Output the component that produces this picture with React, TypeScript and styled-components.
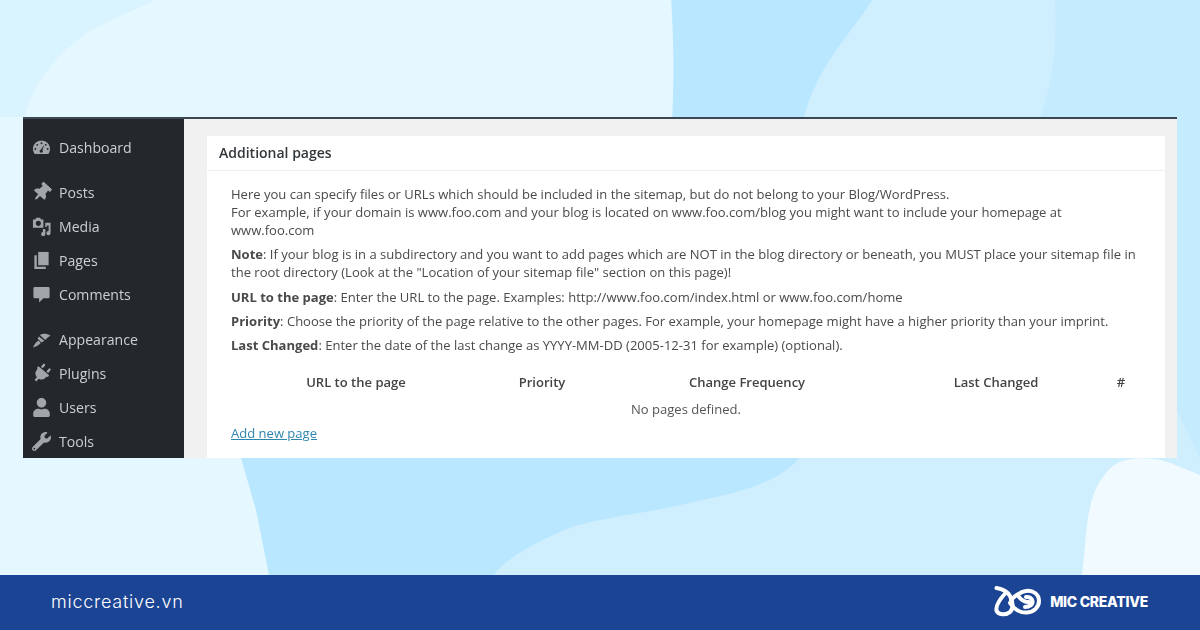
import styled, { createGlobalStyle } from 'styled-components'
import { FaPlug, FaThumbtack, FaUser, FaWrench } from 'react-icons/fa'

const GlobalStyle = createGlobalStyle`
html, body {
  margin: 0;
  padding: 0;
  background: #e5f7ff;
}
* {
  box-sizing: border-box;
}
`

const Page = styled.div`
width: 1200px;
height: 630px;
display: flex;
flex-direction: column;
overflow: hidden;
font-family: 'Open Sans', 'Liberation Sans', sans-serif;
`

const Hero = styled.section`
position: relative;
height: 575px;
padding: 117px 23px 0;
`

const Blobs = styled.svg`
position: absolute;
left: 0;
top: 0;
`

const Shot = styled.div`
position: relative;
height: 341px;
display: flex;
overflow: hidden;
border-top: 2px solid #3b4854;
background: #f1f1f1;
filter: blur(0.35px);
`

const Sidebar = styled.nav`
width: 161px;
flex: none;
background: #23282d;
padding-top: 11px;
display: flex;
flex-direction: column;
`

const MenuGroup = styled.div`
margin-bottom: 11.2px;
`

const MenuItem = styled.div`
height: 34px;
display: flex;
align-items: center;
gap: 8px;
padding-left: 9px;
color: #ccd0d3;
font-size: 14.1px;
svg {
  width: 19px;
  height: 19px;
  flex: none;
  color: #a3a6a9;
  fill: currentColor;
}
`

const Tack = styled(FaThumbtack)`
transform: rotate(42deg);
`

const Plug = styled(FaPlug)`
transform: rotate(40deg);
`

const Content = styled.main`
flex: 1;
padding: 16px 11px 0 22px;
`

const Card = styled.div`
height: 340px;
background: #fff;
border: 1px solid #f0f0f0;
border-bottom: none;
`

const CardTitle = styled.h2`
margin: 0;
height: 35px;
padding: 0 12px 2px;
display: flex;
align-items: center;
font-size: 14px;
font-weight: 600;
color: #32373c;
border-bottom: 1px solid #eeeeee;
`

const CardBody = styled.div`
padding: 14px 24px 0;
font-size: 13.04px;
line-height: 18px;
color: #4a4a4a;
`

const Para = styled.p`
margin: 0 0 6.3px;
`

const PagesTable = styled.div`
margin-top: 14px;
width: 910px;
display: grid;
grid-template-columns: 250px 122px 288px 210px 40px;
grid-auto-rows: 27px;
`

const HeadCell = styled.div`
font-weight: 600;
color: #444;
text-align: center;
align-self: center;
`

const EmptyRow = styled.div`
grid-column: 1 / -1;
text-align: center;
align-self: center;
color: #555;
`

const AddLink = styled.a`
display: inline-block;
margin-top: 2px;
color: #2f86ad;
text-decoration: underline;
`

const Footer = styled.footer`
height: 55px;
background: #1c4494;
display: flex;
align-items: center;
justify-content: space-between;
padding: 0 52px 2px 51px;
color: #fff;
`

const Site = styled.span`
font-family: Inter, 'Liberation Sans', sans-serif;
font-size: 18px;
font-weight: 300;
letter-spacing: 0.75px;
`

const Brand = styled.div`
display: flex;
align-items: center;
gap: 9px;
`

const BrandName = styled.span`
font-family: Inter, 'Liberation Sans', sans-serif;
font-size: 14px;
font-weight: 800;
letter-spacing: -0.28px;
`

const DashIcon = () => (
  <svg viewBox="0 0 20 20">
    <path fillRule="evenodd" d="M10 2.500C4.900 2.500 1 6.500 1 11.400c0 2 .7 3.900 1.800 5.400h14.400c1.100-1.500 1.800-3.400 1.800-5.400 0-4.900-3.900-8.900-9-8.900zM10 4.500a1 1 0 1 1 0 2 1 1 0 0 1 0-2zM5.500 6.200a1 1 0 1 1 0 2 1 1 0 0 1 0-2zM14.500 6.200a1 1 0 1 1 0 2 1 1 0 0 1 0-2zM3.500 10.500a1 1 0 1 1 0 2 1 1 0 0 1 0-2zM16.500 10.500a1 1 0 1 1 0 2 1 1 0 0 1 0-2zM13 7l-2 5.600a1.700 1.700 0 1 1-1.600-.5z" />
  </svg>
)

const MediaIcon = () => (
  <svg viewBox="0 0 20 20">
    <path fillRule="evenodd" d="M1 2.500h2.500l1-1.800h4l1 1.800h2.500v8.800H1zM6.700 4a2.700 2.700 0 1 0 0 5.400 2.700 2.700 0 0 0 0-5.400z" />
    <path d="M14 6h5.500v11a2.200 2.200 0 1 1-2-2.200V9h-2v1.500H14z" />
    <path d="M11.500 12.500h2.500v5.500a2.200 2.200 0 1 1-2.500-2.200z" />
  </svg>
)

const PagesIcon = () => (
  <svg viewBox="0 0 20 20">
    <path d="M6.500 1h11v14h-11z" />
    <path d="M2.500 4.500h2.500v12h9.500v2.500H2.500z" />
  </svg>
)

const CommentIcon = () => (
  <svg viewBox="0 0 20 20">
    <path d="M3 2h14a1.500 1.500 0 0 1 1.500 1.500v9a1.500 1.500 0 0 1-1.500 1.500h-5l-4.500 4.500V14H3a1.500 1.500 0 0 1-1.500-1.500v-9A1.500 1.500 0 0 1 3 2z" />
  </svg>
)

const BrushIcon = () => (
  <svg viewBox="0 0 20 20">
    <path d="M1 18.500C2.500 15 4.500 12.500 6.800 11L9.200 13.800C7 16 4.500 17.800 1 18.500Z" />
    <path d="M7.200 6.800L13 11.200 10 13.200 6 9.200z" />
    <path d="M8.200 5.200C11.500 3.500 15.500 3.500 19.500 6C17.500 7 15.500 8.500 14 10.500Z" />
  </svg>
)

const menuGroups = [
  [{ label: 'Dashboard', icon: <DashIcon /> }],
  [
    { label: 'Posts', icon: <Tack /> },
    { label: 'Media', icon: <MediaIcon /> },
    { label: 'Pages', icon: <PagesIcon /> },
    { label: 'Comments', icon: <CommentIcon /> },
  ],
  [
    { label: 'Appearance', icon: <BrushIcon /> },
    { label: 'Plugins', icon: <Plug /> },
    { label: 'Users', icon: <FaUser /> },
    { label: 'Tools', icon: <FaWrench /> },
  ],
]

const tableHeads = ['URL to the page', 'Priority', 'Change Frequency', 'Last Changed', '#']

const KnotLogo = () => (
  <svg width="47" height="31" viewBox="0 0 47 31" fill="none" stroke="#fff" strokeWidth="4" strokeLinecap="round" strokeLinejoin="round">
    <path d="M2.500 2C8 3 13 4.500 16 10C19 16 20 22 16 26C12 29.500 4 29 2.500 24.500C1.500 20 6 13 12 6.500" />
    <path d="M16 17C20 23 26 27 33 26.500C40 26 45 21 45 15C45 8 39 4 32 5C25 6 20 11 17 14" />
    <path d="M25 11C28 14.500 31 16.500 35 16" />
    <path d="M31 21C36 21 39 18 38.500 15C38 12 35 10.500 32 11" />
  </svg>
)

export default function App() {
  return (
    <>
      <GlobalStyle />
      <Page>
        <Hero>
          <Blobs width="1200" height="575" viewBox="0 0 1200 575">
            <rect width="1200" height="575" fill="#c5ebff" />
            <path d="M0 0H160V117H0Z" fill="#d9f3ff" />
            <path d="M872 0H1055C1057 40 1054 85 1037 125L1200 458V575H400L700 100C750 90 840 40 872 0Z" fill="#cfefff" />
            <path d="M672 0H872C855 30 815 65 802 125L800 458C770 490 720 495 689 503C640 515 590 518 560 532C530 545 505 560 494 575H269L241 458L672 117Z" fill="#b9e7ff" />
            <path d="M0 117H25C32 85 55 55 88 32C110 20 135 10 155 0H671C674 40 674 80 672 125L241 458L256 510L269 575H0Z" fill="#e5f7ff" />
            <path d="M1082 575C1085 550 1086 525 1090 507C1094 490 1098 484 1103 477C1110 466 1118 462 1127 460C1135 458 1145 458 1153 459C1163 460 1172 463 1180 467L1200 475V575Z" fill="#f1faff" />
          </Blobs>
          <Shot>
            <Sidebar>
              {menuGroups.map((group, i) => (
                <MenuGroup key={i}>
                  {group.map((item) => (
                    <MenuItem key={item.label}>
                      {item.icon}
                      <span>{item.label}</span>
                    </MenuItem>
                  ))}
                </MenuGroup>
              ))}
            </Sidebar>
            <Content>
              <Card>
                <CardTitle>Additional pages</CardTitle>
                <CardBody>
                  <Para>
                    Here you can specify files or URLs which should be included in the sitemap, but do not belong to your Blog/WordPress.<br />
                    For example, if your domain is www.foo.com and your blog is located on www.foo.com/blog you might want to include your homepage at www.foo.com
                  </Para>
                  <Para>
                    <b>Note</b>: If your blog is in a subdirectory and you want to add pages which are NOT in the blog directory or beneath, you MUST place your sitemap file in the root directory (Look at the "Location of your sitemap file" section on this page)!
                  </Para>
                  <Para><b>URL to the page</b>: Enter the URL to the page. Examples: http://www.foo.com/index.html or www.foo.com/home</Para>
                  <Para><b>Priority</b>: Choose the priority of the page relative to the other pages. For example, your homepage might have a higher priority than your imprint.</Para>
                  <Para><b>Last Changed</b>: Enter the date of the last change as YYYY-MM-DD (2005-12-31 for example) (optional).</Para>
                  <PagesTable>
                    {tableHeads.map((head) => <HeadCell key={head}>{head}</HeadCell>)}
                    <EmptyRow>No pages defined.</EmptyRow>
                  </PagesTable>
                  <AddLink href="#">Add new page</AddLink>
                </CardBody>
              </Card>
            </Content>
          </Shot>
        </Hero>
        <Footer>
          <Site>miccreative.vn</Site>
          <Brand>
            <KnotLogo />
            <BrandName>MIC CREATIVE</BrandName>
          </Brand>
        </Footer>
      </Page>
    </>
  )
}
